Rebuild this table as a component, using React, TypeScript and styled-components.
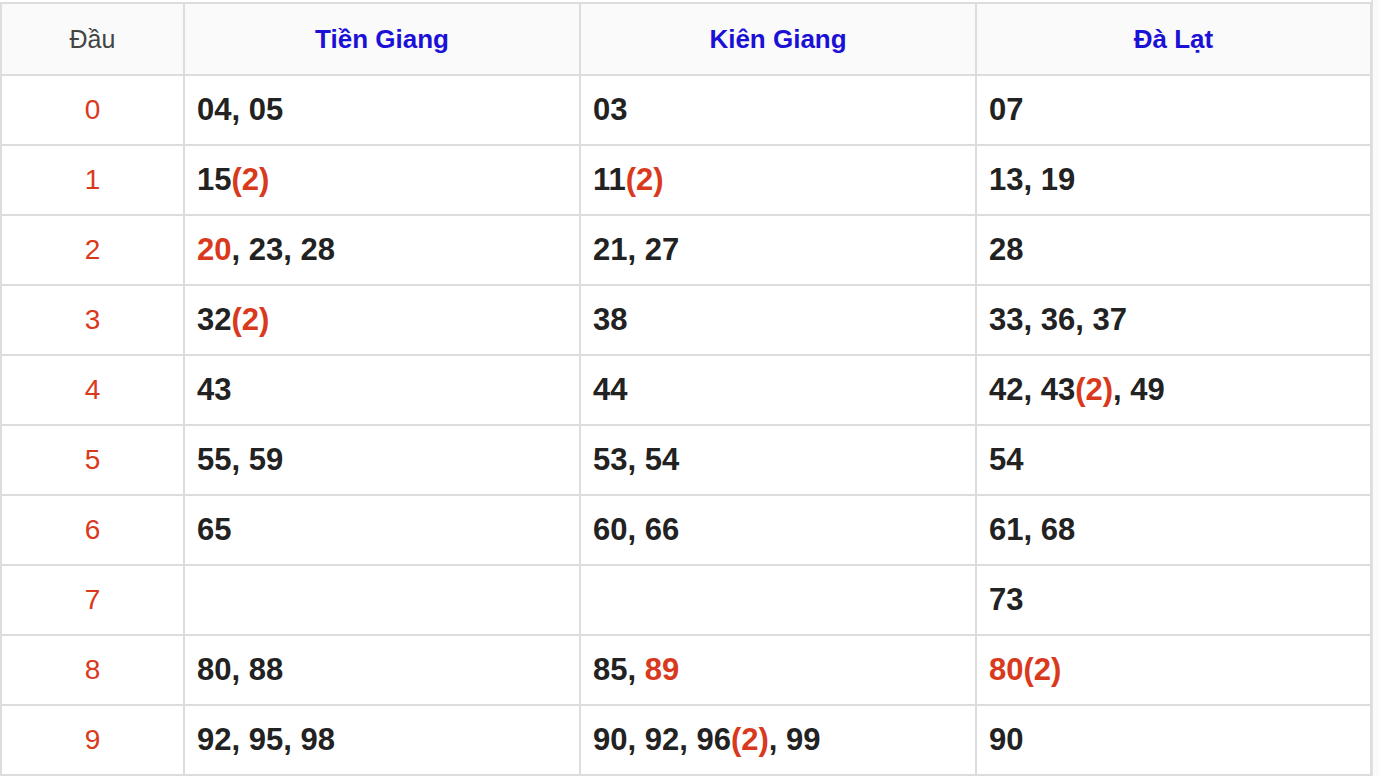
import React from 'react';
import styled, { createGlobalStyle } from 'styled-components';

const GlobalStyle = createGlobalStyle`
  html, body {
    margin: 0;
    padding: 0;
    background: #fafafa;
  }
  body {
    font-family: 'Liberation Sans', Arial, Helvetica, sans-serif;
  }
`;

const Page = styled.div`
  width: 1371px;
  padding-top: 2px;
  background: #fff;
  border-right: 2px solid #e2e2e2;
  height: 774px;
`;

const Table = styled.table`
  border-collapse: separate;
  border-spacing: 0;
  table-layout: fixed;
  width: 1370px;
  border-top: 2px solid #dddddd;
  border-left: 2px solid #dddddd;
`;

const HeadCell = styled.th<{ $first?: boolean }>`
  height: 70px;
  padding: 0;
  background: #fafafa;
  border-right: 2px solid #dddddd;
  border-bottom: 2px solid #dddddd;
  font-size: ${p => (p.$first ? '25px' : '26px')};
  font-weight: ${p => (p.$first ? 'normal' : 'bold')};
  color: ${p => (p.$first ? '#444444' : '#1b11d6')};
  text-align: center;
  vertical-align: middle;
`;

const DigitCell = styled.td`
  height: 68px;
  padding: 0;
  border-right: 2px solid #dddddd;
  border-bottom: 2px solid #dddddd;
  font-size: 28px;
  color: #d9391c;
  text-align: center;
  vertical-align: middle;
`;

const NumCell = styled.td`
  height: 68px;
  padding: 0 0 0 12px;
  border-right: 2px solid #dddddd;
  border-bottom: 2px solid #dddddd;
  font-size: 31px;
  font-weight: bold;
  color: #222222;
  text-align: left;
  vertical-align: middle;
  white-space: nowrap;
`;

const Hot = styled.span`
  color: #d9391c;
`;

// each entry: [number, count, highlighted]
type Item = [string, number?, boolean?];

const columns = ['Tiền Giang', 'Kiên Giang', 'Đà Lạt'];

const rows: Item[][][] = [
  [[['04'], ['05']], [['03']], [['07']]],
  [[['15', 2]], [['11', 2]], [['13'], ['19']]],
  [[['20', 1, true], ['23'], ['28']], [['21'], ['27']], [['28']]],
  [[['32', 2]], [['38']], [['33'], ['36'], ['37']]],
  [[['43']], [['44']], [['42'], ['43', 2], ['49']]],
  [[['55'], ['59']], [['53'], ['54']], [['54']]],
  [[['65']], [['60'], ['66']], [['61'], ['68']]],
  [[], [], [['73']]],
  [[['80'], ['88']], [['85'], ['89', 1, true]], [['80', 2, true]]],
  [[['92'], ['95'], ['98']], [['90'], ['92'], ['96', 2], ['99']], [['90']]],
];

const Numbers: React.FC<{ items: Item[] }> = ({ items }) => (
  <>
    {items.map(([num, count, hot], i) => (
      <React.Fragment key={i}>
        {i > 0 && ', '}
        {hot ? (
          <Hot>
            {num}
            {count && count > 1 ? `(${count})` : ''}
          </Hot>
        ) : (
          <>
            {num}
            {count && count > 1 ? <Hot>({count})</Hot> : null}
          </>
        )}
      </React.Fragment>
    ))}
  </>
);

export default function App() {
  return (
    <>
      <GlobalStyle />
      <Page>
        <Table>
          <colgroup>
            <col style={{ width: 183 }} />
            <col style={{ width: 396 }} />
            <col style={{ width: 396 }} />
            <col style={{ width: 395 }} />
          </colgroup>
          <thead>
            <tr>
              <HeadCell $first>Đầu</HeadCell>
              {columns.map(c => (
                <HeadCell key={c}>{c}</HeadCell>
              ))}
            </tr>
          </thead>
          <tbody>
            {rows.map((row, d) => (
              <tr key={d}>
                <DigitCell>{d}</DigitCell>
                {row.map((items, c) => (
                  <NumCell key={c}>
                    <Numbers items={items} />
                  </NumCell>
                ))}
              </tr>
            ))}
          </tbody>
        </Table>
      </Page>
    </>
  );
}
